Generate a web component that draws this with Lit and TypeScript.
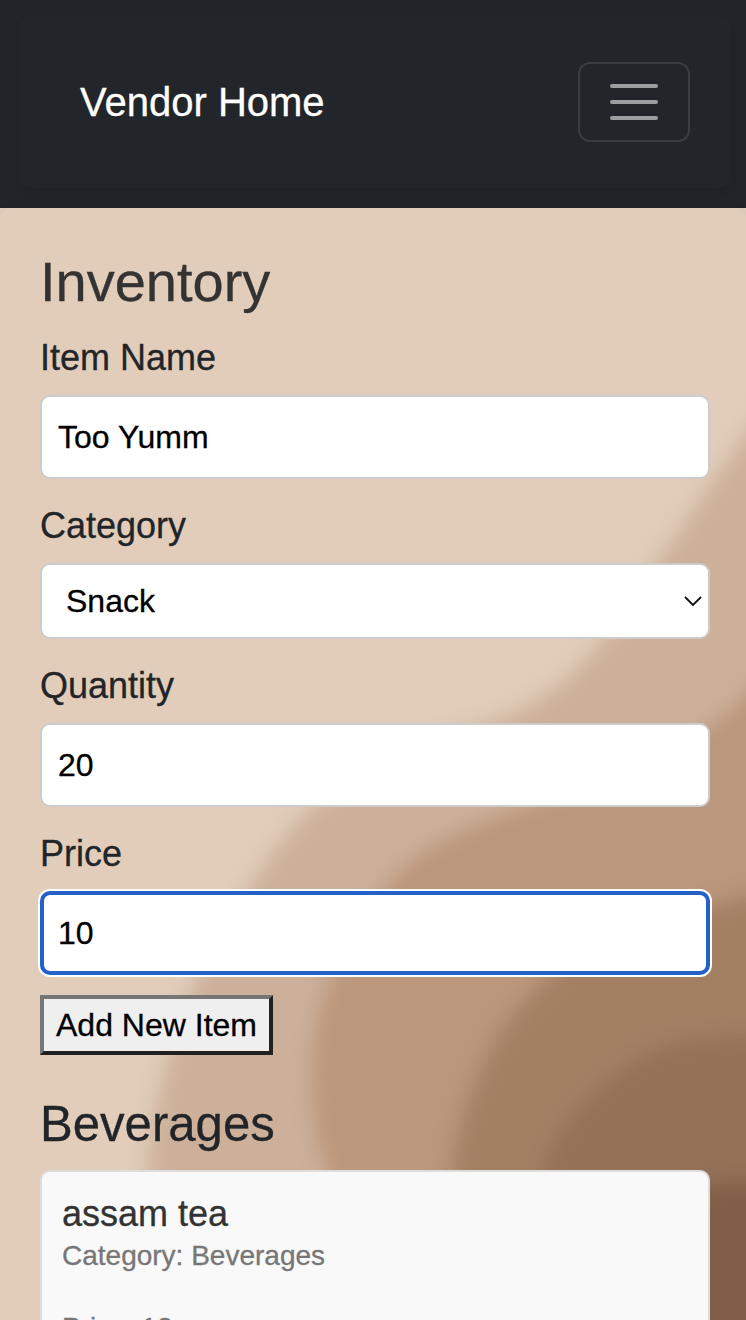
import { LitElement, html, css, svg } from "lit";
import { customElement, property } from "lit/decorators.js";

@customElement("wave-backdrop")
class WaveBackdrop extends LitElement {
  static styles = css`
    :host { display: block; }
    svg { display: block; width: 100%; height: 100%; }
  `;
  render() {
    const layers = [
      ["#ccb09a", "M800 355 C768 410 734 450 706 492 C678 536 654 564 624 610 C588 664 550 707 470 729 C394 748 346 772 306 814 C268 852 250 890 227 927 C187 982 167 1060 160 1092 C150 1130 146 1170 146 1210 L146 1400 L800 1400 Z"],
      ["#bb977b", "M800 620 C765 680 735 710 700 732 C640 770 580 785 520 808 C450 834 415 850 385 887 C335 945 312 1010 312 1075 C312 1130 320 1160 340 1200 L340 1400 L800 1400 Z"],
      ["#a48063", "M800 890 C760 892 720 902 690 912 C630 930 580 950 548 978 C510 1013 492 1040 476 1080 C462 1115 456 1140 452 1175 L440 1400 L800 1400 Z"],
      ["#957158", "M800 1038 L746 1036 C700 1035 665 1042 636 1060 C600 1082 565 1115 545 1160 L520 1400 L800 1400 Z"],
      ["#825e48", "M800 1182 L746 1182 C710 1182 690 1190 670 1210 L600 1400 L800 1400 Z"],
    ];
    return html`<svg viewBox="0 0 746 1320" preserveAspectRatio="none">
      <defs><filter id="soft" filterUnits="userSpaceOnUse" x="-60" y="-60" width="900" height="1500" color-interpolation-filters="sRGB">
        <feGaussianBlur stdDeviation="10"></feGaussianBlur></filter></defs>
      <rect width="746" height="1320" fill="#e1cdba"></rect>
      ${layers.map(([fill, d]) => svg`<path d=${d} fill=${fill} filter="url(#soft)"></path>`)}
    </svg>`;
  }
}

@customElement("form-field")
class FormField extends LitElement {
  @property() label = "";
  @property() value = "";
  @property() kind = "text";
  static styles = css`
    :host { display: block; margin-bottom: 20px; }
    .label { font-size: 36px; line-height: 54px; color: #212529; margin-bottom: 10px; }
    .box {
      box-sizing: border-box; height: 84px; display: flex; align-items: center;
      padding: 0 16px; border: 2px solid #ccc; border-radius: 10px;
      background: #fff; color: #000; font-size: 32px; line-height: 36px;
    }
    .select { height: 76px; justify-content: space-between; padding: 0 6px 0 24px; }
    .focused { border: 4px solid #2361c8; padding: 0 14px; box-shadow: 0 0 0 2px #fff; }
    svg { width: 18px; height: 12px; }
  `;
  render() {
    return html`<div class="label">${this.label}</div>
      <div class="box ${this.kind}">
        <span>${this.value}</span>
        ${this.kind === "select"
          ? html`<svg viewBox="0 0 18 12"><path d="M1 2 L9 10 L17 2" fill="none" stroke="#111" stroke-width="1.8"></path></svg>`
          : ""}
      </div>`;
  }
}

@customElement("app-root")
class AppRoot extends LitElement {
  static styles = css`
    :host {
      display: block; position: relative; height: 1320px; overflow: hidden;
      font-family: "Liberation Sans", Arial, sans-serif; color: #212529;
      -webkit-text-stroke: 0.3px currentColor;
    }
    .backdrop { position: absolute; inset: 0; }
    .page { position: relative; }
    header { background: #212529; height: 208px; box-sizing: border-box; padding: 16px 16px 20px 20px; }
    nav {
      height: 172px; box-sizing: border-box; border-radius: 10px; padding: 0 40px 0 60px;
      display: flex; align-items: center; justify-content: space-between;
      background: #22262a; box-shadow: 0 4px 8px rgba(0, 0, 0, 0.06);
    }
    .brand { color: #fff; font-size: 40px; line-height: 60px; }
    .toggler {
      box-sizing: border-box; width: 112px; height: 80px; border: 2px solid #393c40;
      border-radius: 12px; display: flex; align-items: center; justify-content: center;
    }
    .toggler svg { width: 60px; height: 60px; }
    main { padding: 40px 36px 0 40px; border-radius: 10px; box-shadow: 0 0 8px rgba(0, 0, 0, 0.05); }
    h1 { margin: 0 0 15px; font-size: 56px; line-height: 68px; font-weight: 400; color: #333; }
    .add {
      display: inline-flex; box-sizing: border-box; height: 60px; width: 233px;
      align-items: center; justify-content: center; background: #efefef; color: #000;
      border: 4px solid; border-color: #767676 #212121 #212121 #767676;
      font-size: 32px; line-height: 48px; vertical-align: top; white-space: nowrap;
    }
    h2 { margin: 40px 0 16px; font-size: 49.12px; line-height: 59px; font-weight: 400; }
    .card {
      border: 2px solid #ddd; border-radius: 10px; background: #f9f9f9;
      padding: 20px; height: 300px;
    }
    .name { font-size: 36px; line-height: 43px; color: #333; }
    .meta { font-size: 28px; line-height: 42px; color: #777; margin-bottom: 30px; }
  `;
  render() {
    return html`
      <wave-backdrop class="backdrop"></wave-backdrop>
      <div class="page">
        <header>
          <nav>
            <div class="brand">Vendor Home</div>
            <div class="toggler">
              <svg viewBox="0 0 30 30"><path d="M4 7h22M4 15h22M4 23h22" fill="none" stroke="#9b9d9f" stroke-width="2" stroke-linecap="round"></path></svg>
            </div>
          </nav>
        </header>
        <main>
          <h1>Inventory</h1>
          <form-field label="Item Name" value="Too Yumm"></form-field>
          <form-field label="Category" value="Snack" kind="select"></form-field>
          <form-field label="Quantity" value="20"></form-field>
          <form-field label="Price" value="10" kind="focused"></form-field>
          <div class="add">Add New Item</div>
          <h2>Beverages</h2>
          <section class="card">
            <div class="name">assam tea</div>
            <div class="meta">Category: Beverages</div>
            <div class="meta">Price: 12</div>
          </section>
        </main>
      </div>`;
  }
}
